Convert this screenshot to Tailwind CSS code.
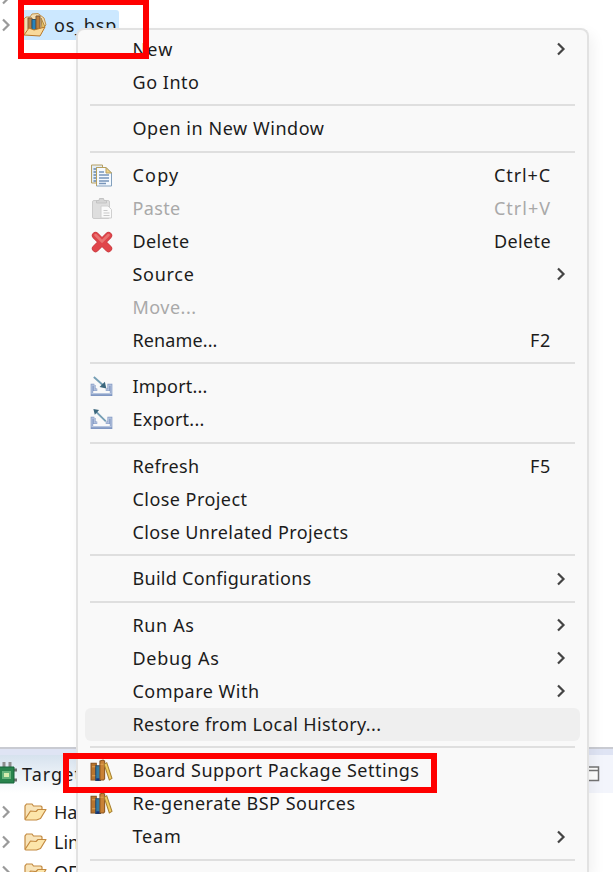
<!DOCTYPE html>
<html lang="en">
<head>
<meta charset="utf-8">
<title>Project context menu</title>
<script src="https://cdn.jsdelivr.net/npm/@tailwindcss/browser@4"></script>
</head>
<body class="bg-white">
<main class="relative h-[872px] w-[613px] overflow-hidden bg-white font-['Noto_Sans','Open_Sans',sans-serif] text-[18px] text-[#1c1c1c]">

<svg class="hidden">
  <symbol id="books" viewBox="0 0 22 22">
    <path d="M1 4h5v16H1z" fill="#b9752d" stroke="#87501d"/>
    <path d="M5.500 6.500h4.500V20.500H5.500z" fill="#347ba2" stroke="#284865"/>
    <path d="M9.500 2l3-1 1.500 1v17l-1 1H9.500z" fill="#c98235" stroke="#8a5520"/>
    <path d="M13.500 5l2.500-1.500L21 18.500 18.500 20z" fill="#f2cf62" stroke="#a98032"/>
    <path d="M2 7.500h3M2 16h3M10 5h3" stroke="#e1a254"/>
    <path d="M6 19.500h3" stroke="#14307b" stroke-width="2"/>
  </symbol>
  <symbol id="bsp" viewBox="0 0 24 24">
    <path d="M1 22V6l2-2h4l2-3 6-.5L21 5l2 7-3 3" fill="#f2ddb1" stroke="#c2924d"/>
    <path d="M5 5h4v11H5z" fill="#b48247" stroke="#85603b"/>
    <path d="M9 6.500h4V17H9z" fill="#2683bd" stroke="#27536f"/>
    <path d="M13 3h4v13h-4z" fill="#bc803d" stroke="#795638"/>
    <path d="M18 5l4 9-3 1z" fill="#edc965" stroke="#ab8445"/>
    <path d="M1 22l5-7 5 2 11-3-5 9z" fill="#f9d99a" stroke="#b97828" stroke-linejoin="round"/>
  </symbol>
  <symbol id="copy" viewBox="0 0 22 23">
    <path d="M1 1h11v18H1z" fill="#e3edf5" stroke="#b6a065"/>
    <path d="M3 5h3M3 8h3M3 11h3M3 14h3M3 17h3" stroke="#6688ae" stroke-width="1.400"/>
    <path d="M6 3.500h9.500L21 9v13H6z" fill="#f5faff" stroke="#83a0bd"/>
    <path d="M6 22V3.500h9.500" fill="none" stroke="#b8a05e"/>
    <path d="M15.500 3.500V9H21z" fill="#f0d388" stroke="#b8a05e"/>
    <path d="M8.500 8h5M8.500 11h10M8.500 14h10M8.500 17h10M8.500 19.500h7" stroke="#7795ba" stroke-width="1.400"/>
  </symbol>
  <symbol id="paste" viewBox="0 0 22 23">
    <rect x="2" y="3.500" width="17" height="18" rx="1.500" fill="#dedede" stroke="#cbcbcb"/>
    <path d="M6 6V3.500h2.500L9 1.500h4l.5 2H16V6z" fill="#d5d5d5" stroke="#c3c3c3"/>
    <path d="M10.500 9h7l3.500 3.500V21H10.500z" fill="#fafafa" stroke="#d0d0d0"/>
    <path d="M13 13.500h4M13 16h6M13 18.500h6" stroke="#c9c9c9"/>
  </symbol>
  <symbol id="delete" viewBox="0 0 22 22">
    <path d="M5.300 5.300L17.700 17.700M17.700 5.300L5.300 17.700" stroke="#cc4348" stroke-width="7" stroke-linecap="round"/>
    <path d="M5.300 5.300L17.700 17.700M17.700 5.300L5.300 17.700" stroke="#e0454a" stroke-width="5.500" stroke-linecap="round"/>
    <path d="M5.300 4.800l6.200 6.200 6.200-6.200" fill="none" stroke="#ea7472" stroke-width="2.500" stroke-linecap="round"/>
  </symbol>
  <symbol id="import" viewBox="0 0 24 22">
    <path d="M4.500 9.500H2V19.500h20V9.500h-2.500V14.500h-3M4.500 9.500V14.500h3" fill="none" stroke="#8097c2" stroke-width="2.600"/>
    <path d="M4.500 9.500H2V18.500h20V9.500h-2.500V14.500h-3M4.500 9.500V14.500h3" fill="none" stroke="#b6c5df" stroke-width="1.200"/>
    <path d="M4 1l10 9" stroke="#759eb4" stroke-width="2"/>
    <path d="M17 13l-7-1.500L15.500 6z" fill="#3b667c"/>
  </symbol>
  <symbol id="export" viewBox="0 0 24 22">
    <path d="M4.500 9.500H2V19.500h20V9.500h-2.500V14.500h-3M4.500 9.500V14.500h3" fill="none" stroke="#8097c2" stroke-width="2.600"/>
    <path d="M4.500 9.500H2V18.500h20V9.500h-2.500V14.500h-3M4.500 9.500V14.500h3" fill="none" stroke="#b6c5df" stroke-width="1.200"/>
    <path d="M6.500 3l10 10" stroke="#759eb4" stroke-width="2"/>
    <path d="M3.500 0l6 1-4.500 5z" fill="#3b667c"/>
  </symbol>
  <symbol id="folder" viewBox="0 0 23 18">
    <path d="M1 16V3l1.500-2H8l1.500 2H17l1 1v4" fill="#f8e4b9" stroke="#c48a40" stroke-width="1.200"/>
    <path d="M1 16.500L6.500 8 12 8.500 14 6.500h8L16.500 15.500l-4 1.500H2z" fill="#fce5aa" stroke="#c48a40" stroke-width="1.200" stroke-linejoin="round"/>
  </symbol>
  <symbol id="chevron" viewBox="0 0 10 14">
    <path d="M2 1.500L7.500 7 2 12.500" fill="none" stroke="currentColor" stroke-width="2.200"/>
  </symbol>
</svg>

<!-- Project explorer -->
<section class="flex h-[747px] flex-col">
  <div class="flex h-[10px] items-start"><svg class="-mt-[9px] ml-px h-[14px] w-[10px] text-[#9a9a9a]"><use href="#chevron"/></svg></div>
  <div class="flex h-[30px] items-center">
    <svg class="ml-px h-[14px] w-[10px] shrink-0 text-[#9a9a9a]"><use href="#chevron"/></svg>
    <div class="ml-[11px] flex h-[30px] w-[97px] items-center rounded-r-[3px] bg-[#cce8ff]">
      <svg class="ml-px h-6 w-6 shrink-0"><use href="#bsp"/></svg>
      <span class="ml-[7px] whitespace-nowrap" data-width="63">os_bsp</span>
    </div>
  </div>
</section>

<!-- Target panel -->
<section class="flex h-[125px] flex-col overflow-hidden">
  <div class="h-[8px] shrink-0 border-t-2 border-[#c9cbd2] bg-[#dfe4f4]"></div>
  <div class="flex h-[38px] shrink-0 items-center bg-[#f3f5fc]">
    <div class="flex h-full w-[200px] items-center bg-linear-to-b from-[#d6e2ee] to-white">
      <svg class="-mt-[3px] h-6 w-[17px]" viewBox="0 0 17 24">
        <path d="M4 1v5M10 1v5" stroke="#8d8d8d" stroke-width="3"/>
        <path d="M13 9h4M13 19h4" stroke="#707070" stroke-width="3"/>
        <path d="M-2 6h16v16H-2z" fill="#29844d" stroke="#17643a"/>
        <path d="M3 11h7v6H3z" fill="#d5edae" stroke="#67b47c" stroke-width="2"/>
      </svg>
      <span class="ml-[5px] whitespace-nowrap" data-width="60">Target</span>
    </div>
    <svg class="ml-auto mr-[13px] h-4 w-4" viewBox="0 0 16 16"><path d="M1 1h13.500v13.500H1zM1 4.500h13.500" fill="#fff" stroke="#747474" stroke-width="1.500"/></svg>
  </div>
  <div class="flex h-[30px] shrink-0 items-center pt-[8px]"><svg class="ml-px h-[14px] w-[10px] text-[#9a9a9a]"><use href="#chevron"/></svg><svg class="ml-[13px] h-[18px] w-[23px]"><use href="#folder"/></svg><span class="ml-[7px] whitespace-nowrap">Hardware</span></div>
  <div class="flex h-[30px] shrink-0 items-center pt-[8px]"><svg class="ml-px h-[14px] w-[10px] text-[#9a9a9a]"><use href="#chevron"/></svg><svg class="ml-[13px] h-[18px] w-[23px]"><use href="#folder"/></svg><span class="ml-[7px] whitespace-nowrap">Linux</span></div>
  <div class="flex h-[30px] shrink-0 items-center pt-[8px]"><svg class="ml-px h-[14px] w-[10px] text-[#9a9a9a]"><use href="#chevron"/></svg><svg class="ml-[13px] h-[18px] w-[23px]"><use href="#folder"/></svg><span class="ml-[7px] whitespace-nowrap">QEMU</span></div>
</section>

<!-- Context menu -->
<nav id="menu" class="absolute left-[76px] top-[28px] flex h-[844px] w-[513px] flex-col overflow-hidden rounded-t-[8px] border-2 border-b-0 border-[#e2e2e2] bg-[#f9f9f9] pt-[2.5px] shadow-[4px_6px_14px_rgba(0,0,0,0.06)]"></nav>

<!-- Callouts -->
<div class="absolute -top-px left-[18px] h-[60px] w-[131px] border-[6px] border-[#ff0000]"></div>
<div class="absolute left-[63px] top-[753px] h-[40px] w-[374px] border-[6px] border-[#ff0000]"></div>
</main>

<script>
// label, label width, icon, shortcut or ">" for a submenu, state; null is a separator
const items = [
  ["New", 41, "", ">"], ["Go Into", 67], null,
  ["Open in New Window", 192], null,
  ["Copy", 47, "copy", "Ctrl+C"], ["Paste", 48, "paste", "Ctrl+V", "off"], ["Delete", 57, "delete", "Delete"],
  ["Source", 62, "", ">"], ["Move...", 64, "", "", "off"], ["Rename...", 85, "", "F2"], null,
  ["Import...", 75, "import"], ["Export...", 72, "export"], null,
  ["Refresh", 67, "", "F5"], ["Close Project", 115], ["Close Unrelated Projects", 216], null,
  ["Build Configurations", 179, "", ">"], null,
  ["Run As", 62, "", ">"], ["Debug As", 87, "", ">"], ["Compare With", 127, "", ">"],
  ["Restore from Local History...", 249, "", "", "hover"], null,
  ["Board Support Package Settings", 287, "books"], ["Re-generate BSP Sources", 223, "books"], ["Team", 49, "", ">"], null
];
const keyWidth = { "Ctrl+C": 57, "Ctrl+V": 57, "Delete": 57, "F2": 21, "F5": 21 };
document.getElementById("menu").innerHTML = items.map(item => {
  if (!item) return '<div class="flex h-[13.5px] shrink-0 items-center px-[12px]"><div class="h-[2px] w-full bg-[#dfdfdf]"></div></div>';
  const [label, width, icon, end, state] = item;
  const tone = state === "off" ? "text-[#a9a9a9]" : state === "hover" ? "bg-[#efefef]" : "";
  const image = icon ? `<svg class="h-[23px] w-[23px]"><use href="#${icon}"/></svg>` : "";
  const tail = end === ">" ? '<svg class="ml-auto mr-[14px] h-[14px] w-[10px] text-[#444]"><use href="#chevron"/></svg>'
    : end ? `<span class="ml-auto mr-[29px] whitespace-nowrap" data-width="${keyWidth[end]}">${end}</span>` : "";
  return `<div class="mx-[7px] flex h-[33px] shrink-0 items-center rounded-[6px] ${tone}"><span class="ml-[5px] flex w-[42.5px] shrink-0">${image}</span><span class="whitespace-nowrap" data-width="${width}">${label}</span>${tail}</div>`;
}).join("");
const pen = document.createElement("canvas").getContext("2d");
pen.font = '18px "Noto Sans"';
document.querySelectorAll("[data-width]").forEach(el => {
  const natural = pen.measureText(el.textContent).width;
  el.style.letterSpacing = (el.dataset.width - natural) / el.textContent.length + "px";
});
</script>
</body>
</html>
